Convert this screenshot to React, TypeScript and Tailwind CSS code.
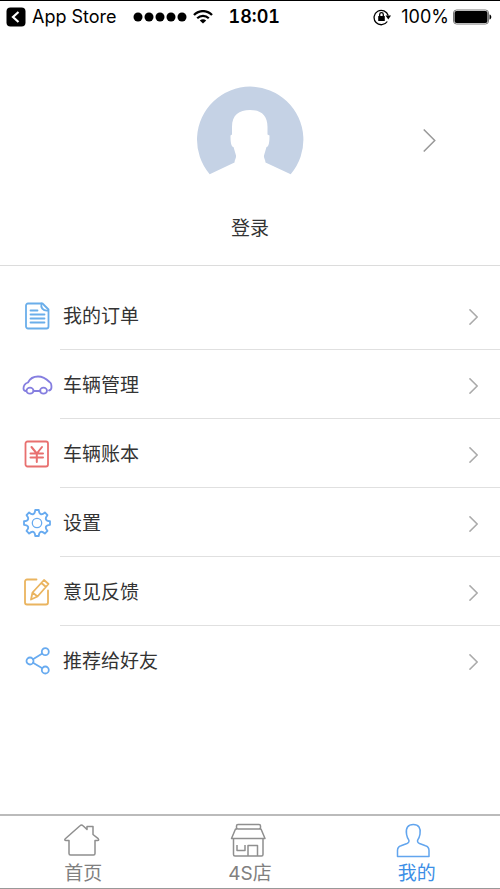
import type { ReactNode } from "react";

const Chevron = ({ className }: { className: string }) => (
  <svg viewBox="0 0 12 22" fill="none" stroke="currentColor" className={className} aria-hidden="true">
    <path d="M0.5 0.5 11 11 0.5 21.5" strokeWidth="1.5" vectorEffect="non-scaling-stroke" />
  </svg>
);

const MenuIcon = ({ color, children }: { color: string; children: ReactNode }) => (
  <svg
    viewBox="0 0 32 32"
    fill="none"
    stroke="currentColor"
    strokeWidth="1.8"
    strokeLinejoin="round"
    strokeLinecap="round"
    className={`h-8 w-8 ${color}`}
    aria-hidden="true"
  >
    {children}
  </svg>
);

const menuItems = [
  {
    label: "我的订单",
    icon: (
      <MenuIcon color="text-[#6aaeea]">
        <path d="M7 3.5h14.5l6 6V26.5a2 2 0 0 1-2 2H7a2 2 0 0 1-2-2V5.5a2 2 0 0 1 2-2Z" />
        <path d="M20.5 3.5c-1 4 1 7.500 6.500 7" />
        <path d="M9.5 10.5h7M9.5 14.5h14M9.5 18.5h14M9.5 22.5h14" />
      </MenuIcon>
    ),
  },
  {
    label: "车辆管理",
    icon: (
      <MenuIcon color="text-[#857ee0]">
        <path d="M5 22c-1.5 0-2.5-.8-2.5-2.5 0-3.5 1.5-5 4.5-6 2-4 5-6 10-6 5.5 0 8.5 2.5 11.5 5.5 1.5.6 2 3 2 5 0 2-.7 3.3-2.5 3.5M12.5 22h7" />
        <ellipse cx="9" cy="21.7" rx="3.5" ry="3" />
        <ellipse cx="22.5" cy="21.7" rx="3.5" ry="3" />
      </MenuIcon>
    ),
  },
  {
    label: "车辆账本",
    icon: (
      <MenuIcon color="text-[#e8706f]">
        <rect x="4.5" y="3.5" width="22.5" height="25" rx="2" />
        <path d="M10.5 9l5.3 6.5 5.2-6.5M15.8 15.5v8.5M9.5 15.5h12.5M9.5 19.5h12.5" strokeWidth="2" />
      </MenuIcon>
    ),
  },
  {
    label: "设置",
    icon: (
      <MenuIcon color="text-[#68abf0]">
        <path d="M14.2 3h3.6C18 7.5 20.5 8.5 23.9 5.5l2.6 2.6C23.5 11.5 24.5 14 29 14.2v3.6C24.5 18 23.5 20.5 26.5 23.9l-2.6 2.6C20.5 23.5 18 24.5 17.8 29h-3.6C14 24.5 11.5 23.5 8.1 26.5l-2.6-2.6C8.5 20.5 7.5 18 3 17.8v-3.6C7.5 14 8.5 11.5 5.5 8.1l2.6-2.6C11.5 8.5 14 7.5 14.2 3Z" />
        <circle cx="16" cy="16" r="4.7" strokeWidth="1.3" />
      </MenuIcon>
    ),
  },
  {
    label: "意见反馈",
    icon: (
      <MenuIcon color="text-[#eab45f]">
        <path d="M15.5 3.5H6a2 2 0 0 0-2 2V26.5a2 2 0 0 0 2 2h19a2 2 0 0 0 2-2V14.5" />
        <path d="M10 23.5l1.5-7L23 4l4.5 4L16.5 20.5ZM11.5 16.5l5 4M20.5 7l4.5 4" />
      </MenuIcon>
    ),
  },
  {
    label: "推荐给好友",
    icon: (
      <MenuIcon color="text-[#68abf0]">
        <circle cx="9" cy="16" r="3.5" />
        <circle cx="24.3" cy="6.7" r="3.5" />
        <circle cx="24.3" cy="25" r="3.5" />
        <path d="M12 14.2l9.3-5.6M12 17.8l9.3 5.4" />
      </MenuIcon>
    ),
  },
];

const tabs = [
  {
    label: "首页",
    active: false,
    icon: (
      <path d="M7 31.5V18.5H4c-1.5 0-1.5-1-.7-1.8L18 3.7c1-1 2-1 3 0L25 7.5V4.5h6V12.5l5.2 4.2c.8.8.6 1.8-.7 1.8H33V31.5a1.5 1.5 0 0 1-1.5 1.5h-23A1.5 1.5 0 0 1 7 31.5Z" />
    ),
  },
  {
    label: "4S店",
    active: false,
    icon: (
      <>
        <path d="M8 7H6.5L2.5 16.5h33.5L32 7h-1.5" />
        <rect x="7.5" y="2.5" width="24" height="4.5" rx="1.5" />
        <path d="M4.5 17v15.5a1.5 1.5 0 0 0 1.5 1.5h26.5a1.5 1.5 0 0 0 1.5-1.5V17" />
        <path d="M8 23v5.5h8V23M19 34V23.5h9.5V34" />
      </>
    ),
  },
  {
    label: "我的",
    active: true,
    icon: (
      <path d="M1.5 34.5v-6c0-2.5 1-4 3.5-4.800l6-2.200c2-.8 2.500-2.500 1.500-4-1.300-1.500-1.500-3-2-5.500C9.500 6 12 2.500 17.300 2.500s7.700 3.500 6.700 9.500c-.5 2.500-.7 4-2 5.500-1 1.500-.5 3.200 1.500 4l6 2.200c2.500.8 3.500 2.300 3.500 4.800v6Z" />
    ),
  },
];

const StatusBar = () => (
  <header className="flex h-8 items-center border-t border-black pl-1.5 pr-2 text-lg leading-6 text-black">
    <a href="#appstore" className="flex items-center gap-1.5">
      <svg viewBox="0 0 20 20" className="h-5 w-5" aria-hidden="true">
        <rect x="0.5" y="0.5" width="19" height="19" rx="4" />
        <path d="M12.5 5 7 10l5.5 5" fill="none" stroke="#fff" strokeWidth="2.2" />
      </svg>
      App Store
    </a>
    <svg viewBox="0 0 54 10" className="ml-4 h-2.5 w-[54px]" aria-hidden="true">
      {[5, 16, 27, 38, 49].map((cx) => (
        <circle key={cx} cx={cx} cy="5" r="4.5" />
      ))}
    </svg>
    <svg viewBox="0 0 20 14" className="ml-1.5 h-3.5 w-5" fill="none" stroke="#000" aria-hidden="true">
      <path d="M1 5C6-.2 14-.2 19 5" strokeWidth="2.3" />
      <path d="M4.2 8.3c3.4-3.3 8.2-3.3 11.6 0" strokeWidth="2.2" />
      <path d="M10 13.5 6.8 10.5c2-1.6 4.4-1.6 6.4 0Z" fill="#000" stroke="none" />
    </svg>
    <time className="ml-4 font-semibold tabular-nums">18:01</time>
    <svg viewBox="0 0 20 18" className="ml-auto h-[18px] w-5" fill="none" stroke="#000" aria-hidden="true">
      <path d="M14.3 13.5A7.2 7.2 0 1 1 15.2 7.5" strokeWidth="1.3" />
      <path d="M12.5 7.5h5.5l-2.7 4Z" fill="#000" stroke="none" />
      <rect x="5.2" y="8" width="6.6" height="5" rx="0.5" fill="#000" stroke="none" />
      <path d="M6.7 8V6.5a1.8 1.8 0 0 1 3.6 0V8" strokeWidth="1.3" />
    </svg>
    <span className="ml-2">100%</span>
    <svg viewBox="0 0 39 16" className="ml-1 h-4 w-[39px]" aria-hidden="true">
      <rect x="0.5" y="1" width="35" height="14" rx="3" fill="none" stroke="#777" />
      <rect x="1.5" y="2" width="33" height="12" rx="2" />
      <path d="M36.5 5.5c2.4.4 2.4 4.6 0 5Z" />
    </svg>
  </header>
);

const Profile = () => (
  <a
    href="#login"
    className="grid h-[234px] grid-cols-[1fr_auto_1fr] border-b border-[#dcdcdc] pt-[54px] text-[#333]"
  >
    <div className="col-start-2 flex flex-col items-center">
      <svg viewBox="0 0 108 90" className="h-[90px] w-[108px] fill-[#c5d2e5]" aria-hidden="true">
        <path d="M13.7 88.3A53.2 53.2 0 1 1 94.7 88.3L69.5 76.5C69.5 74 67.5 72 68 69.5L70.5 61C73 60.5 73.500 56 73.500 49.500L71.5 48.5V41C71.5 29 65 24 54 24S36 29 36 41V48.5L34.5 49.5C34.5 56 35 60.5 37.5 61L40 69.5C40.5 72 38.5 74 38.5 76.5Z" />
      </svg>
      <span className="mt-[39px] text-[19px] leading-7">登录</span>
    </div>
    <Chevron className="mr-16 mt-[43px] h-[23px] w-[13px] justify-self-end text-[#999]" />
  </a>
);

const App = () => {
  return (
    <div className="flex min-h-screen flex-col border-b border-[#999] bg-white font-[Inter,'Noto_Sans_CJK_SC',sans-serif]">
      <StatusBar />
      <main className="flex-1">
        <Profile />
        <ul className="pt-[15px]">
          {menuItems.map((item) => (
            <li key={item.label} className="group">
              <a href="#menu" className="flex h-[69px] text-[19px] leading-7 text-[#333]">
                <span className="flex w-[60px] items-center pl-[21px]">{item.icon}</span>
                <span className="flex flex-1 items-center justify-between border-b border-[#e0e0e0] pl-[3px] pr-[22px] pt-[3px] group-last:border-transparent">
                  {item.label}
                  <Chevron className="h-4 w-[9px] text-[#aaa]" />
                </span>
              </a>
            </li>
          ))}
        </ul>
      </main>
      <nav className="grid grid-cols-3 border-t-2 border-[#bbb] pt-1.5">
        {tabs.map((tab) => (
          <a
            key={tab.label}
            href="#tab"
            aria-current={tab.active ? "page" : undefined}
            className={`flex flex-col items-center text-[19px] leading-7 ${
              tab.active ? "text-[#3d8fe6]" : "text-[#808080]"
            }`}
          >
            <svg
              viewBox="0 0 42 38"
              fill="none"
              stroke="currentColor"
              strokeWidth="1.5"
              strokeLinejoin="round"
              className={`h-[38px] w-[42px] ${tab.active ? "text-[#62a5ee]" : "text-[#8f8f8f]"}`}
              aria-hidden="true"
            >
              {tab.icon}
            </svg>
            {tab.label}
          </a>
        ))}
      </nav>
    </div>
  );
};

export default App;
